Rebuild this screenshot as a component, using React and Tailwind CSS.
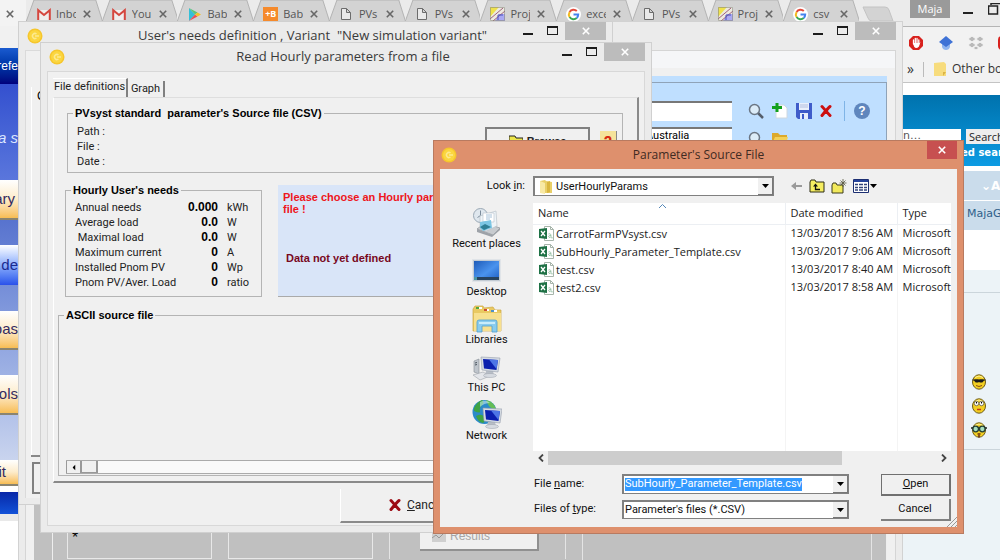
import React, { useState } from "react";
import clsx from "clsx";

const browserTabs = [
    { name: "Inbo", icon: "gmail" },
    { name: "You", icon: "gmail" },
    { name: "Bab", icon: "play" },
    { name: "Bab", icon: "babel" },
    { name: "PVs", icon: "page" },
    { name: "PVs", icon: "page" },
    { name: "Proj", icon: "chart" },
    { name: "exce", icon: "google" },
    { name: "PVs", icon: "page" },
    { name: "Proj", icon: "chart" },
    { name: "csv", icon: "google" },
];

const needs = [
    { label: "Annual needs", value: "0.000", unit: "kWh" },
    { label: "Average load", value: "0.0", unit: "W" },
    { label: "\u00a0Maximal load", value: "0.0", unit: "W" },
    { label: "Maximum current", value: "0", unit: "A" },
    { label: "Installed Pnom PV", value: "0", unit: "Wp" },
    { label: "Pnom PV/Aver. Load", value: "0", unit: "ratio" },
];

const files = [
    { name: "CarrotFarmPVsyst.csv", date: "13/03/2017 8:56 AM" },
    { name: "SubHourly_Parameter_Template.csv", date: "13/03/2017 9:06 AM" },
    { name: "test.csv", date: "13/03/2017 8:40 AM" },
    { name: "test2.csv", date: "13/03/2017 8:58 AM" },
];

/* ==================== Icons ==================== */

function TabIcon({ type }) {
    if (type === "gmail") {
        return (
            <svg className="h-[13px] w-[14px] shrink-0" viewBox="0 0 14 13">
                <path d="M1 2h12v10H1z" fill="#f0eeee" />
                <path d="M1.2 12V2.2L7 7l5.8-4.8V12" fill="none" stroke="#d5473f" strokeWidth="2" />
            </svg>
        );
    }
    if (type === "play") {
        return (
            <svg className="h-[13px] w-[14px] shrink-0" viewBox="0 0 14 13">
                <path d="M1 0v13l6-6.5z" fill="#35bfd8" />
                <path d="M1 0l6 6.5L9.500 4.500z" fill="#5bc47a" />
                <path d="M1 13l6-6.500 2.500 2z" fill="#e8505b" />
                <path d="M9.500 4.500L13 6.500l-3.500 2L7 6.500z" fill="#f5c228" />
            </svg>
        );
    }
    if (type === "babel") {
        return (
            <span className="flex h-[15px] w-[15px] shrink-0 items-center justify-center bg-[#f58a2c] text-[9px] font-bold text-white">
                +B
            </span>
        );
    }
    if (type === "page") {
        return (
            <svg className="h-[12px] w-[12px] shrink-0" viewBox="0 0 12 12">
                <path d="M1.500 .5h5l4 4v7h-9zM6.500 .5v4h4" fill="#e9e9e9" stroke="#6c6c6c" />
            </svg>
        );
    }
    if (type === "chart") {
        return (
            <svg className="h-[14px] w-[15px] shrink-0" viewBox="0 0 15 14">
                <path d="M0 0h15v14H0z" fill="#eceae0" />
                <path d="M0 0h9L0 10z" fill="#efe24c" />
                <path d="M9 7h6v7H5z" fill="#a9a9f2" />
                <path d="M0 12L13 1M3 14L15 4" stroke="#a0607c" strokeWidth="1" />
                <path d="M8 8h5M8 8v5" stroke="#4b54c4" />
                <path d="M.5 .5h14v13H.5z" fill="none" stroke="#8a8a80" strokeWidth=".6" />
            </svg>
        );
    }
    return (
        <svg className="h-[15px] w-[15px] shrink-0" viewBox="0 0 15 15">
            <circle cx="7.500" cy="7.500" r="7.500" fill="#fff" />
            <g fill="none" strokeWidth="2">
                <path d="M3.600 5A4.700 4.700 0 0 1 10.800 4" stroke="#e34a3b" />
                <path d="M3.600 10A5 5 0 0 1 3.600 5" stroke="#f3b91f" />
                <path d="M10.700 11A4.700 4.700 0 0 1 3.600 10" stroke="#38a855" />
                <path d="M7.500 7.500h4.700a4.700 4.700 0 0 1-1.500 3.500" stroke="#4482ee" />
            </g>
        </svg>
    );
}

function AppIcon() {
    return (
        <svg className="h-4 w-4 shrink-0" viewBox="0 0 16 16">
            <circle cx="8" cy="8" r="7.500" fill="#f6c62c" />
            <circle cx="8" cy="8" r="6" fill="#fbd640" />
            <path d="M9.500 6a2.500 2.500 0 1 0 0 4M8 8h4" fill="none" stroke="#fdea90" strokeWidth="1.500" />
        </svg>
    );
}

function Cross({ className }) {
    return (
        <svg className={className} viewBox="0 0 10 10">
            <path d="M1 1l8 8M9 1L1 9" fill="none" stroke="currentColor" strokeWidth="2" />
        </svg>
    );
}

function BoldCross({ className }) {
    return (
        <svg className={className} viewBox="0 0 12 12">
            <path d="M2 1.500c2 2 5 6 8 9M10 1.500C8 3 4 8 2 10.500" fill="none" stroke="currentColor" strokeWidth="3" strokeLinecap="round" />
        </svg>
    );
}

function Triangle({ className = "h-[4px] w-[7px]" }) {
    return (
        <svg className={className} viewBox="0 0 8 4" preserveAspectRatio="none">
            <path d="M0 0h8L4 4z" fill="#000" />
        </svg>
    );
}

function Magnifier() {
    return (
        <svg className="h-4 w-4" viewBox="0 0 16 16">
            <path d="M10 10l5 5" stroke="#555e6b" strokeWidth="2.500" />
            <circle cx="6.500" cy="6.500" r="5" fill="#dcecf8" stroke="#6b7684" strokeWidth="1.500" />
        </svg>
    );
}

function ExcelIcon() {
    return (
        <svg className="h-[15px] w-[15px] shrink-0" viewBox="0 0 15 15">
            <path d="M5.500 .5h6l3 3v11h-9z" fill="#fff" stroke="#a7b5ab" />
            <path d="M11.500 .5v3h3" fill="none" stroke="#a7b5ab" />
            <path d="M9.500 8c2.500-1 2.500 1 2.500 4M12 9.500c-3-.5-3 2-1 2M13 11v1.500" fill="none" stroke="#9cc5aa" />
            <path d="M0 3l8-1v11l-8-1z" fill="#1e7145" />
            <path d="M2 5l4 5M6 5l-4 5" stroke="#fff" strokeWidth="1.300" />
        </svg>
    );
}

function RecentIcon() {
    return (
        <svg className="h-[30px] w-[30px]" viewBox="0 0 30 30">
            <path d="M5 22l8-6 15 5-7 7z" fill="#c7cbcf" stroke="#8b9096" strokeWidth=".7" />
            <path d="M5 22v3l15 5 8-7v-2l-7 7z" fill="#9da2a8" />
            <circle cx="8.500" cy="8.500" r="7" fill="#dfe7ee" stroke="#9aa8b5" />
            <path d="M8.500 3.500v5l-3 2" fill="none" stroke="#7b8b9b" />
            <path d="M8 9l16-5 1 15-11 5-6-3z" fill="#eef4f8" stroke="#b2bcc5" strokeWidth=".6" />
            <path d="M11 6h11v9H11z" fill="#fff" stroke="#b5c0ca" strokeWidth=".6" />
            <path d="M8 15l11-2 1 8-9 3-3-3z" fill="#7cc6e4" />
            <path d="M8 20l5-3 6 3-7 3z" fill="#2f7f96" />
            <path d="M14 8h6M14 10h6M14 12h4" stroke="#91b2d0" strokeWidth=".8" />
        </svg>
    );
}

function DesktopIcon() {
    return (
        <svg className="h-[23px] w-[29px]" viewBox="0 0 29 23">
            <defs>
                <linearGradient id="desk" x1="0" y1="0" x2="1" y2="1">
                    <stop offset="0" stopColor="#1e5bb8" />
                    <stop offset=".55" stopColor="#4a93ee" />
                    <stop offset="1" stopColor="#1f5fc4" />
                </linearGradient>
            </defs>
            <path d="M.5 .5h28v22H.5z" fill="#c3cbd3" stroke="#e0e4e8" />
            <path d="M2 2h25v19H2z" fill="url(#desk)" />
            <path d="M2 18h25v3H2z" fill="#27435f" />
            <path d="M2 18h3v3H2z" fill="#4b97a6" />
        </svg>
    );
}

function LibrariesIcon() {
    return (
        <svg className="h-[28px] w-[30px]" viewBox="0 0 30 28">
            <path d="M1 4l2-3h8l1 2 9-1 2 3h6v21H1z" fill="#e9c962" stroke="#cda744" strokeWidth=".7" />
            <path d="M2 8h27v18H2z" fill="#f7e08f" />
            <path d="M4 2h6v2H4z" fill="#fff" />
            <path d="M4 2h3v2H4z" fill="#51a83c" />
            <path d="M12 4h5v2h-5z" fill="#fff" />
            <path d="M12 4h3v2h-3z" fill="#cf4a32" />
            <path d="M19 5h6v2h-6z" fill="#fff" />
            <path d="M19 5h3v2h-3z" fill="#4e90c8" />
            <path d="M5 27V17q0-2 2-2h16q2 0 2 2v10h-5v-6H10v6z" fill="#8accee" stroke="#4fa0ce" strokeWidth=".8" />
            <path d="M7 17h16v2H7z" fill="#c8ecfb" />
        </svg>
    );
}

function Monitor({ x, y }) {
    return (
        <g transform={`translate(${x} ${y})`}>
            <path d="M5 15h7l1 4H4z" fill="#b7bdc6" />
            <ellipse cx="9" cy="19.500" rx="6.500" ry="2" fill="#d6dae0" stroke="#9ca2ac" strokeWidth=".5" />
            <path d="M0 1l19 1-2 14L1 14z" fill="#d5dbe3" stroke="#969eab" strokeWidth=".6" />
            <path d="M2 3l15 1-1.500 10L3 12.500z" fill="#0b1fae" />
            <path d="M8 3.400l9 .6-1.500 9z" fill="#4d75e6" />
        </g>
    );
}

function ThisPcIcon() {
    return (
        <svg className="h-[26px] w-[30px]" viewBox="0 0 30 26">
            <path d="M2 6l5-2v15l-5-2z" fill="#bfc5cc" stroke="#868d96" strokeWidth=".6" />
            <path d="M3 8l2-.5M3 10l2-.5" stroke="#4c555f" />
            <path d="M1 20l10-3 7 4-10 4z" fill="#e4e6ea" stroke="#9ea3aa" strokeWidth=".6" />
            <Monitor x={9} y={1} />
        </svg>
    );
}

function NetworkIcon() {
    return (
        <svg className="h-[30px] w-[30px]" viewBox="0 0 30 30">
            <circle cx="12.500" cy="13" r="12" fill="#2c8bc9" />
            <path d="M2 9Q5 3 10 1q3 2 0 5t-2 6-6 0zM4 17q6-3 8 1t-1 6q-5-1-7-7z" fill="#3ea344" />
            <path d="M14 1q8 2 10 9-5 0-7-3t-3-6z" fill="#64bd55" />
            <path d="M8 3q6-3 10 1-6 0-10 4z" fill="#c5e9ee" fillOpacity=".6" />
            <Monitor x={11} y={8} />
        </svg>
    );
}

function Smiley({ kind }) {
    return (
        <svg className="h-4 w-4" viewBox="0 0 16 16">
            <ellipse cx="8" cy="8" rx="6.500" ry="7.200" fill="#f3cf22" stroke="#6d5a16" />
            <path d="M4 3.500q4-3 8 0" fill="none" stroke="#fff39b" />
            {kind === "cool" && (
                <>
                    <path d="M1.500 6h13M3.500 6h4v2h-3zM8.500 6h4l-1 2h-3z" fill="#1a1a1a" stroke="#1a1a1a" />
                    <path d="M5 11.500q3 2 6 0" fill="none" stroke="#8a4b12" />
                </>
            )}
            {kind === "roll" && (
                <>
                    <circle cx="5.500" cy="5.500" r="2.200" fill="#fff" stroke="#333" strokeWidth=".6" />
                    <circle cx="10.500" cy="5.500" r="2.200" fill="#fff" stroke="#333" strokeWidth=".6" />
                    <path d="M5.500 4v1.500M10.500 4v1.500" stroke="#000" />
                    <path d="M6 11.500h4" stroke="#c03a18" strokeWidth="1.500" />
                </>
            )}
            {kind === "geek" && (
                <>
                    <path d="M0 6h16" stroke="#222" strokeWidth="1.500" />
                    <circle cx="4.700" cy="7" r="2.800" fill="#a6dfc0" stroke="#243f35" strokeWidth="1.300" />
                    <circle cx="11.300" cy="7" r="2.800" fill="#a6dfc0" stroke="#243f35" strokeWidth="1.300" />
                    <path d="M6.500 12h3M8 13v2.500" stroke="#6b2e10" strokeWidth="1.500" />
                </>
            )}
        </svg>
    );
}

/* ==================== Window parts ==================== */

function WindowButtons() {
    return (
        <div className="flex items-start">
            <button aria-label="Minimize" className="flex h-[13px] w-6 items-end justify-center">
                <span className="h-[2px] w-[10px] bg-[#1c1c1c]" />
            </button>
            <button aria-label="Maximize" className="flex h-[13px] w-6 items-end justify-center">
                <span className="h-[9px] w-[11px] border border-t-2 border-[#1c1c1c]" />
            </button>
            <button aria-label="Close" className="ml-px flex h-[18px] w-[41px] items-center justify-center bg-[#bcbcbc] text-white">
                <Cross className="h-2 w-2" />
            </button>
        </div>
    );
}

function TitleBar({ title }) {
    return (
        <div className="grid h-7 grid-cols-[100px_1fr_100px] pr-[6px]">
            <div className="flex items-center pl-2">
                {title && <AppIcon />}
            </div>
            <h2 className="self-center text-center font-['Open_Sans',sans-serif] text-[13px] whitespace-pre text-[#3a3a3a]">
                {title}
            </h2>
            <div className="flex justify-end">
                <WindowButtons />
            </div>
        </div>
    );
}

function GroupBox({ title, className, children }) {
    return (
        <fieldset className={clsx("border border-[#b4b4b4]", className)}>
            <legend className="ml-[5px] px-[2px] font-['Liberation_Sans',sans-serif] text-[11px] leading-[12px] font-bold whitespace-pre text-black">
                {title}
            </legend>
            {children}
        </fieldset>
    );
}

/* ==================== Browser behind the windows ==================== */

function BrowserTab({ name, icon }) {
    return (
        <button className="relative flex h-[22px] min-w-0 flex-1 items-start pt-[6px] pl-[10px] text-left">
            <svg className="absolute inset-0 h-full w-full" viewBox="0 0 76 22" preserveAspectRatio="none">
                <path d="M0 22L8 0H70L77 22z" fill="#d3d3d3" stroke="#b3b3b3" />
            </svg>
            <span className="relative flex w-full items-center">
                <span className="flex w-[15px] shrink-0 justify-center">
                    <TabIcon type={icon} />
                </span>
                <span className="ml-[5px] h-4 w-[20px] shrink-0 overflow-hidden font-['Open_Sans',sans-serif] text-[11px] leading-[16px] text-[#555]">
                    {name}
                </span>
                <Cross className="ml-[7px] h-2 w-2 shrink-0 text-[#666]" />
            </span>
        </button>
    );
}

function TabStrip() {
    return (
        <header className="flex h-[26px] w-full overflow-hidden bg-[#ebebeb]">
            <div className="flex w-[26px] shrink-0 items-start bg-[#f3f3f3] pt-[10px] pl-[6px]">
                <Cross className="h-2 w-2 text-[#666]" />
            </div>
            <div className="flex w-[833px] shrink-0">
                {browserTabs.map((tab, index) => (
                    <BrowserTab key={index} name={tab.name} icon={tab.icon} />
                ))}
            </div>
            <svg className="mt-[6px] ml-[3px] h-4 w-8 shrink-0" viewBox="0 0 32 16">
                <path d="M1 1h22q3 0 4 3l4 11H10q-3 0-4-3z" fill="#d3d3d3" stroke="#c3c3c3" />
            </svg>
            <span className="ml-4 flex h-[18px] w-10 shrink-0 items-center justify-center bg-[#9a9a9a] font-['Open_Sans',sans-serif] text-[11px] text-white">
                Maja
            </span>
            <span className="mt-3 ml-[13px] h-[2px] w-[10px] shrink-0 bg-[#222]" />
            <svg className="mt-[3px] ml-[15px] h-3 w-3 shrink-0" viewBox="0 0 12 12">
                <path d="M.5 3h9v8h-9zM3 2V.5h9" fill="none" stroke="#222" strokeWidth="1.500" />
            </svg>
        </header>
    );
}

function ForumPage() {
    return (
        <main className="min-w-0 flex-1 overflow-hidden bg-[#ecf3f7] font-['DejaVu_Sans',sans-serif] text-[11px] whitespace-nowrap">
            <div className="flex h-[33px] items-center gap-[14px] border-t border-[#b5b5b5] bg-[#f2f2f2] pl-[5px]">
                <svg className="h-4 w-4 shrink-0" viewBox="0 0 16 16">
                    <path d="M5 1h6l4 4v6l-4 4H5l-4-4V5z" fill="#d8211d" />
                    <path d="M5.500 9V5M7.300 8V3.500M9 8V3.500M10.800 9V5" stroke="#fff" strokeWidth="1.300" strokeLinecap="round" />
                    <path d="M5 8h6.500l1-1.500-1.500 5q-3 3-5 0z" fill="#fff" />
                </svg>
                <svg className="h-4 w-4 shrink-0" viewBox="0 0 16 16">
                    <path d="M4 8h8v4q-1 3-4 3t-4-3z" fill="#8fb5f0" />
                    <path d="M8 1l7 6-7 5-7-5z" fill="#3e72d6" />
                </svg>
                <svg className="h-4 w-4 shrink-0" viewBox="0 0 16 16">
                    <path d="M4 1l4 3-4 3-4-3zM12 1l4 3-4 3-4-3zM4 7l4 3-4 3-4-3zM12 7l4 3-4 3-4-3zM8 11l3 2-3 2-3-2z" fill="#b9b9b9" stroke="#f2f2f2" />
                </svg>
                <span className="h-[14px] w-3 shrink-0 rounded bg-[#d8211d]" />
            </div>
            <div className="flex h-6 items-center border-b border-[#c4c4c4] bg-[#f2f2f2] pb-[3px] font-['Open_Sans',sans-serif] text-[12px] text-[#333]">
                <span className="w-5 shrink-0 pl-1 text-sm leading-[16px]">»</span>
                <span className="h-[15px] w-px shrink-0 bg-[#bbb]" />
                <svg className="mr-[6px] ml-[10px] h-[14px] w-3 shrink-0" viewBox="0 0 12 14">
                    <path d="M0 1l10-1 2 2v12H0z" fill="#f7dc7d" />
                    <path d="M9 14v-4h3z" fill="#dbb545" />
                </svg>
                Other bookmarks
            </div>
            <div className="h-3 bg-white" />
            <div className="h-[71px] bg-linear-to-b from-[#0072ad] to-[#0c9be3] pt-[33px]">
                <div className="flex h-4 items-center gap-[5px]">
                    <input aria-label="Search forum" defaultValue="n…" className="h-[14px] w-[58px] shrink-0 bg-white font-['DejaVu_Sans',sans-serif] text-[11px] text-[#555]" />
                    <button className="h-[15px] bg-[#eee] px-[3px] font-['Open_Sans',sans-serif] text-[11px] leading-[15px] text-[#222]">Search</button>
                </div>
                <a href="#search" className="ml-[58px] block pt-[2px] text-[10px] leading-[14px] font-bold text-white">
                    ed search
                </a>
            </div>
            <div className="h-[5px] bg-white" />
            <div className="h-[29px] bg-[#cadceb] pt-[6px] pl-[78px] text-[12px] font-bold text-white">⌄A</div>
            <div className="h-px bg-white" />
            <div className="h-[29px] bg-[#cadceb] pt-[5px] pl-[64px] text-[#2f5f8a]">
                <a href="#user">MajaG</a>
            </div>
            <div className="h-10 bg-white" />
            <div className="h-[23px] border-b border-[#cbd5db]" />
            <div className="flex h-[157px] flex-col gap-2 border-b border-[#cbd5db] pt-[81px] pl-[68px]">
                <Smiley kind="cool" />
                <Smiley kind="roll" />
                <Smiley kind="geek" />
            </div>
        </main>
    );
}

function PageBehind() {
    const links = "flex shrink-0 items-center justify-end overflow-hidden whitespace-nowrap border-b-2 border-[#8a8470] bg-linear-to-b from-white via-[#fdeccb] to-[#f7bd52] text-[15px] text-[#332a60]";
    return (
        <div className="flex min-h-[534px]">
            <aside className="flex w-[18px] shrink-0 flex-col overflow-hidden bg-white font-['Liberation_Sans',sans-serif]">
                <div className="h-[22px] bg-[#f1f1f1]" />
                <div className="flex h-9 items-center justify-end bg-linear-to-b from-[#1a5bd0] to-[#00007c] text-[12px] text-white">
                    refe
                </div>
                <div className="flex h-24 items-center justify-end bg-linear-to-b from-[#3450cf] to-[#5a76dc] pt-3 text-[15px] whitespace-nowrap text-[#dbe6ff] italic">
                    a s
                </div>
                <div className="flex h-[280px] flex-col bg-linear-to-b from-[#4762c8] to-[#c9d4ee]">
                    <button className={clsx("mb-[25px] h-10 pr-[3px]", links)}>ary</button>
                    <button className="mb-[26px] flex h-10 shrink-0 items-center justify-end overflow-hidden bg-linear-to-b from-white to-[#2b50ea] text-[15px] whitespace-nowrap text-[#1a2b90]">
                        t de
                    </button>
                    <button className={clsx("mb-[25px] h-[39px]", links)}>bas</button>
                    <button className={clsx("h-10", links)}>ols</button>
                </div>
                <button className={clsx("h-[26px] pr-3", links)}>it</button>
                <div className="mt-[6px] h-[22px] bg-linear-to-b from-[#0a27a8] to-[#1352d8]" />
                <div className="h-[7px] bg-[#e9e9e9]" />
            </aside>
            <div className="w-[885px] shrink-0" />
            <ForumPage />
        </div>
    );
}

/* ==================== Project window ==================== */

function ProjectWindow() {
    return (
        <section className="absolute top-[21px] left-[18px] flex h-[600px] w-[885px] flex-col border-x border-t border-[#d2d2d2] bg-[#ebebeb] text-[11px]">
            <TitleBar />
            <div className="mx-[6px] flex flex-1 flex-col border border-[#d5d5d5] bg-[#f0f0f0]">
                <div className="h-[17px] bg-[#f5f6f8]" />
                <div className="mt-[8px] mr-2 ml-2 h-[400px] bg-[#bfdfff] pt-[6px]">
                    <div className="h-full border-t border-r border-[#8fa3b8] pt-[18px] pr-[8px]">
                        <div className="flex items-center justify-end">
                            <input aria-label="Project" className="mr-4 h-5 w-[120px] border-t-2 border-[#777] bg-white" />
                            <button aria-label="Find" className="mr-2"><Magnifier /></button>
                            <button aria-label="New" className="mr-2">
                                <svg className="h-4 w-4" viewBox="0 0 16 16">
                                    <path d="M4 2h8l3 3v10H4z" fill="#fff" stroke="#cfd8e0" />
                                    <path d="M5 0v9M0 4.500h10" stroke="#13a01d" strokeWidth="3" />
                                </svg>
                            </button>
                            <button aria-label="Save" className="mr-2">
                                <svg className="h-4 w-4" viewBox="0 0 16 16">
                                    <path d="M0 0h16v16H2l-2-2z" fill="#3f5cc9" />
                                    <path d="M3 0h10v7H3zM4 10h8v6H4z" fill="#e8effb" />
                                    <path d="M4 2h8M4 4h8" stroke="#b3bfdf" />
                                    <path d="M6 11h2v5H6z" fill="#3f5cc9" />
                                </svg>
                            </button>
                            <button aria-label="Delete" className="text-[#cc0e0e]"><BoldCross className="h-4 w-3" /></button>
                            <span className="ml-3 h-5 w-px bg-[#7fb4e6]" />
                            <button aria-label="Help" className="ml-[9px]">
                                <span className="mr-2 flex h-4 w-4 items-center justify-center rounded-full bg-[#5f86bd] font-['Liberation_Sans',sans-serif] text-[12px] font-bold text-white">
                                    ?
                                </span>
                            </button>
                        </div>
                        <div className="mt-[6px] flex items-start justify-end">
                            <div className="mr-4 h-5 w-[120px] border-t-2 border-[#777] bg-white pl-[34px] font-['Roboto',sans-serif] text-[11px] leading-[14px]">
                                Australia
                            </div>
                            <span className="mt-1 mr-2"><Magnifier /></span>
                            <svg className="mt-1 mr-[90px] h-4 w-4" viewBox="0 0 16 16">
                                <path d="M0 2h6l2 2h7v9H0z" fill="#dca92c" />
                                <path d="M3 6h13l-2 7H0z" fill="#f4d158" />
                            </svg>
                        </div>
                    </div>
                </div>
                <div className="mx-2 flex flex-1 bg-[#c0c0c0]">
                    <div className="ml-[18px] flex h-[100px] flex-1 gap-4 border-x border-[#eee] pr-[14px] pl-[14px]">
                        <div className="flex h-[83px] w-[145px] items-end border border-[#e8e8e8] pb-[12px] pl-1 font-['Liberation_Sans',sans-serif] text-base leading-[16px]">*</div>
                        <div className="h-[83px] w-[145px] border border-[#e8e8e8]" />
                        <div className="flex h-[83px] flex-1 items-end border-x border-[#e4e4e4] pb-[8px] pl-[30px]">
                            <button disabled className="flex h-9 w-[119px] items-center gap-1 border-r-2 border-b-2 border-[#909090] bg-[#f0f0f0] pt-2 pl-3 font-['Liberation_Sans',sans-serif] text-[12px] text-[#a5a5a5]">
                                <svg className="h-3 w-[14px]" viewBox="0 0 14 12">
                                    <path d="M0 0h14v12H0z" fill="#cfcfcf" />
                                    <path d="M0 8l4-3 3 3 6-6" fill="none" stroke="#999" />
                                </svg>
                                Results
                            </button>
                        </div>
                        <div className="w-[290px] border-x border-[#e4e4e4]" />
                    </div>
                </div>
            </div>
        </section>
    );
}

/* ==================== User's needs window ==================== */

function NeedsWindow() {
    return (
        <section className="absolute top-[21px] left-[18px] flex h-[484px] w-[595px] flex-col border border-[#d0d0d0] bg-[#ebebeb] pb-[6px] pl-[6px]">
            <div className="-ml-[6px]">
                <TitleBar title={'User\'s needs definition , Variant  "New simulation variant"'} />
            </div>
            <div className="flex flex-1 flex-col justify-between border-t border-l border-[#dadada] bg-[#f0f0f0] pt-9 pl-[5px]">
                <div className="flex-1 border-l border-white pl-[5px] font-['Liberation_Sans',sans-serif] text-[12px] leading-[18px]">C</div>
                <div className="border-t-2 border-[#888]" />
                <div className="mt-[5px] mb-1 ml-[1px] h-8 w-40 border-2 border-[#808080]" />
            </div>
        </section>
    );
}

/* ==================== Hourly parameters window ==================== */

function HourlyWindow() {
    const [tab, setTab] = useState("files");
    return (
        <section className="absolute top-[42px] left-[40px] flex h-[491px] w-[612px] flex-col border border-[#d0d0d0] bg-[#ebebeb] px-[6px] pb-[6px] font-['Roboto',sans-serif] text-[11px] text-[#222]">
            <div className="-mx-[6px]">
                <TitleBar title="Read Hourly parameters from a file" />
            </div>
            <div className="flex flex-1 flex-col border border-[#d8d8d8] bg-[#f0f0f0] px-[5px] pt-[6px]">
                <div role="tablist" className="flex items-end">
                    <button
                        role="tab"
                        aria-selected={tab === "files"}
                        onClick={() => setTab("files")}
                        className="h-[19px] w-[75px] border-t border-r-2 border-t-white border-r-[#808080] pb-[2px] whitespace-nowrap"
                    >
                        File definitions
                    </button>
                    <button
                        role="tab"
                        aria-selected={tab === "graph"}
                        onClick={() => setTab("graph")}
                        className="h-4 w-[37px] border-r-2 border-r-[#808080]"
                    >
                        Graph
                    </button>
                </div>
                <div className="flex flex-col border-t border-r-2 border-b-2 border-l border-t-[#dedede] border-r-[#8a8a8a] border-b-[#8a8a8a] border-l-white pt-[9px] pr-2 pb-[5px] pl-1">
                    <GroupBox title="PVsyst standard  parameter's Source file (CSV)" className="mr-[6px] ml-[9px] h-[66px]">
                        <div className="flex justify-between pl-[9px]">
                            <div className="flex flex-col pt-[5px] leading-[15px]">
                                <span>Path :</span>
                                <span>File :</span>
                                <span>Date :</span>
                            </div>
                            <div className="mt-[8px] flex gap-[10px] pr-[5px]">
                                <button className="flex h-7 w-[105px] items-center justify-center gap-1 border-2 border-[#808080] font-['Liberation_Sans',sans-serif] font-bold">
                                    <svg className="h-3 w-[14px]" viewBox="0 0 14 12">
                                        <path d="M0 1h6l1 2h7v9H0z" fill="#ece54a" stroke="#222" />
                                    </svg>
                                    Browse
                                </button>
                                <button aria-label="Help" className="mt-1 h-6 w-[17px] border-r border-[#888] bg-[#f5e39a] text-[16px] leading-[16px] font-bold text-[#d82a10]">?</button>
                            </div>
                        </div>
                    </GroupBox>
                    <div className="mt-[11px] flex items-end gap-4">
                        <GroupBox title="Hourly User's needs" className="ml-[7px] h-[113px] w-[197px]">
                            <table className="mt-[4px] ml-[9px]">
                                <tbody>
                                    {needs.map((item, index) => (
                                        <tr key={index} className="h-[15px] leading-[15px]">
                                            <td className="w-[104px] whitespace-nowrap">{item.label}</td>
                                            <td className="w-[39px] text-right font-['Liberation_Sans',sans-serif] text-[12px] font-bold text-black">{item.value}</td>
                                            <td className="pl-[9px]">{item.unit}</td>
                                        </tr>
                                    ))}
                                </tbody>
                            </table>
                        </GroupBox>
                        <div className="flex h-[112px] flex-1 flex-col gap-[37px] border-b border-[#aaa] bg-[#d9e5f8] pt-[6px] pl-[5px] font-['Liberation_Sans',sans-serif] leading-[12px] font-bold">
                            <p className="text-[#ee1520]">
                                Please choose an Hourly parameters
                                <br />
                                file !
                            </p>
                            <p className="pl-[3px] text-[#78081e]">Data not yet defined</p>
                        </div>
                    </div>
                    <GroupBox title="ASCII source file" className="mt-[12px] flex h-[167px] flex-col">
                        <div className="mt-[139px] ml-[7px] flex h-[14px] border-t border-b border-[#aaa] bg-[#f9f9f9]">
                            <button aria-label="Scroll left" className="flex w-4 items-center justify-center border-r-2 border-l border-[#999] bg-[#f0f0f0]">
                                <span className="rotate-90"><Triangle className="h-[3px] w-[6px]" /></span>
                            </button>
                            <span className="w-4 border-r-2 border-b border-[#999] bg-[#f0f0f0]" />
                        </div>
                    </GroupBox>
                </div>
                <button className="mt-[6px] ml-[287px] flex h-[34px] w-[150px] items-center gap-[6px] border-b-2 border-l border-b-[#8a8a8a] border-l-white pl-12 text-[12px]">
                    <BoldCross className="h-[14px] w-3 text-[#9c0b14]" />
                    <span><u>C</u>ancel</span>
                </button>
            </div>
        </section>
    );
}

/* ==================== File dialog ==================== */

function Place({ name, children }) {
    return (
        <button className="flex h-12 w-full flex-col items-center justify-end">
            {children}
            <span className="leading-[14px]">{name}</span>
        </button>
    );
}

function DropButton({ label }) {
    return (
        <button aria-label={label} className="flex w-[15px] shrink-0 items-center justify-center border-r border-b border-[#777] bg-[#f0f0f0]">
            <Triangle />
        </button>
    );
}

function FileDialog() {
    return (
        <section
            role="dialog"
            aria-labelledby="dialog-title"
            className="absolute top-[140px] left-[433px] flex h-[394px] w-[531px] flex-col border border-[#b87a60] bg-[#de906d] px-[6px] pb-[6px] font-['Roboto',sans-serif] text-[11px] text-[#111]"
        >
            <div className="grid h-[28px] grid-cols-[40px_1fr_40px]">
                <div className="flex items-center pl-px"><AppIcon /></div>
                <h2 id="dialog-title" className="self-center text-center font-['Open_Sans',sans-serif] text-[12px] text-[#402a22]">
                    Parameter's Source File
                </h2>
                <div className="flex justify-end">
                    <button aria-label="Close" className="flex h-[18px] w-[30px] items-center justify-center bg-[#c75050] text-white">
                        <Cross className="h-2 w-2" />
                    </button>
                </div>
            </div>
            <div className="relative flex flex-1 flex-col bg-[#f0f0f0] pt-[7px] pr-[6px]">
                <div className="flex h-5 items-center">
                    <label htmlFor="look-in" className="w-[93px] pr-2 text-right">Look <u>i</u>n:</label>
                    <div className="flex h-5 w-[241px] border border-t-2 border-l-2 border-[#808080] bg-white">
                        <svg className="mt-px ml-1 h-[15px] w-[14px] shrink-0" viewBox="0 0 14 15">
                            <path d="M1 2l5-1 1 1 6 1v11H1z" fill="#e9cf68" />
                            <path d="M1 2l5 2v11l-5-1z" fill="#f8e9a4" />
                            <path d="M8 3l3-1v11l-3 1z" fill="#d9b63f" />
                        </svg>
                        <select id="look-in" className="ml-[3px] min-w-0 flex-1 appearance-none bg-transparent leading-[16px]">
                            <option>UserHourlyParams</option>
                        </select>
                        <DropButton label="Show folders" />
                    </div>
                    <div className="ml-4 flex items-center gap-[6px]">
                        <button aria-label="Back">
                            <svg className="h-[14px] w-[13px]" viewBox="0 0 13 14">
                                <path d="M6 3v3h6v2H6v3L1 7z" fill="#9a9a9a" />
                            </svg>
                        </button>
                        <button aria-label="Up one level">
                            <svg className="h-[14px] w-4" viewBox="0 0 16 14">
                                <path d="M1 3l1-2h4l1 2h8v10H1z" fill="#f6ee62" stroke="#2c2c16" />
                                <path d="M6.500 6v4.500H11" fill="none" stroke="#111" strokeWidth="1.300" />
                                <path d="M4 7.500l2.500-3 2.500 3z" fill="#111" />
                            </svg>
                        </button>
                        <button aria-label="New folder">
                            <svg className="h-[15px] w-4" viewBox="0 0 16 15">
                                <path d="M1 6l1-2h3l1 2h6v8H1z" fill="#f1e95c" stroke="#3b3b1e" />
                                <path d="M12 0v8M8.500 4h7M9.500 1.500l5 5M14.500 1.500l-5 5" stroke="#55553e" strokeWidth=".8" />
                            </svg>
                        </button>
                        <button aria-label="View" className="flex items-center gap-px">
                            <svg className="h-[14px] w-4" viewBox="0 0 16 14">
                                <path d="M.5 .5h15v13H.5z" fill="#fff" stroke="#1c2f72" />
                                <path d="M1 1h14v2H1z" fill="#25439b" />
                                <path d="M2 5.500h3M6 5.500h4M11 5.500h3M2 8.500h3M6 8.500h4M11 8.500h3M2 11h3M6 11h4M11 11h3" stroke="#33457c" strokeWidth="1.500" />
                            </svg>
                            <Triangle />
                        </button>
                    </div>
                </div>
                <div className="mt-[7px] flex">
                    <nav className="flex w-[93px] shrink-0 flex-col">
                        <Place name="Recent places"><RecentIcon /></Place>
                        <Place name="Desktop"><span className="mb-[3px]"><DesktopIcon /></span></Place>
                        <Place name="Libraries"><LibrariesIcon /></Place>
                        <Place name="This PC"><ThisPcIcon /></Place>
                        <Place name="Network"><NetworkIcon /></Place>
                    </nav>
                    <div className="min-w-0 flex-1">
                        <div className="h-[248px] overflow-hidden bg-white">
                            <table className="h-full w-full table-fixed font-['Open_Sans',sans-serif] text-[11px] text-[#222]">
                                <thead>
                                    <tr className="h-[21px] border-b border-[#eceff3] text-left">
                                        <th className="relative w-[252px] border-r border-[#eceff3] pl-[5px] font-normal">
                                            Name
                                            <svg className="absolute top-[1px] left-1/2 h-1 w-[7px]" viewBox="0 0 7 4">
                                                <path d="M0 4l3.500-3.500L7 4" fill="none" stroke="#5588b8" />
                                            </svg>
                                        </th>
                                        <th className="w-[112px] border-r border-[#eceff3] pl-[5px] font-normal">Date modified</th>
                                        <th className="pl-[5px] font-normal">Type</th>
                                    </tr>
                                </thead>
                                <tbody>
                                    {files.map((file) => (
                                        <tr key={file.name} className="h-[18px] whitespace-nowrap">
                                            <td className="border-r border-[#f4f4f4] pl-[6px]">
                                                <span className="flex items-center gap-[2px] leading-[18px]">
                                                    <ExcelIcon />
                                                    {file.name}
                                                </span>
                                            </td>
                                            <td className="border-r border-[#f4f4f4] pl-[5px]">{file.date}</td>
                                            <td className="pl-[5px]">Microsoft</td>
                                        </tr>
                                    ))}
                                    <tr>
                                        <td className="border-r border-[#f4f4f4]" />
                                        <td className="border-r border-[#f4f4f4]" />
                                        <td />
                                    </tr>
                                </tbody>
                            </table>
                        </div>
                        <div className="flex h-[14px] items-center justify-between">
                            <button aria-label="Scroll left" className="flex w-[15px] justify-center">
                                <svg className="h-2 w-[6px]" viewBox="0 0 6 8">
                                    <path d="M5 .5L1.500 4 5 7.500" fill="none" stroke="#444" strokeWidth="1.800" />
                                </svg>
                            </button>
                            <span className="mr-auto h-[14px] w-[294px] bg-[#cdcdcd]" />
                            <button aria-label="Scroll right" className="flex w-[15px] justify-center">
                                <svg className="h-2 w-[6px]" viewBox="0 0 6 8">
                                    <path d="M1 .5L4.500 4 1 7.500" fill="none" stroke="#444" strokeWidth="1.800" />
                                </svg>
                            </button>
                        </div>
                    </div>
                </div>
                <div className="mt-[9px] ml-[94px] flex justify-between">
                    <div className="flex flex-col gap-[6px]">
                        <div className="flex items-center">
                            <label htmlFor="file-name" className="w-[88px]">File <u>n</u>ame:</label>
                            <div className="flex h-5 w-[227px] justify-between border border-t-2 border-l-2 border-[#808080] bg-white">
                                <input
                                    id="file-name"
                                    defaultValue="SubHourly_Parameter_Template.csv"
                                    className="my-[2px] ml-[1px] field-sizing-content bg-[#3399ff] text-white"
                                />
                                <DropButton label="Show recent names" />
                            </div>
                        </div>
                        <div className="flex items-center">
                            <label htmlFor="file-type" className="w-[88px]">Files of <u>t</u>ype:</label>
                            <div className="flex h-[19px] w-[227px] border border-t-2 border-l-2 border-[#808080] bg-white">
                                <select id="file-type" className="ml-[1px] min-w-0 flex-1 appearance-none bg-transparent leading-[16px]">
                                    <option>Parameter's files (*.CSV)</option>
                                </select>
                                <DropButton label="Show types" />
                            </div>
                        </div>
                    </div>
                    <div className="flex w-[70px] flex-col gap-[3px]">
                        <button className="h-[22px] border border-r-2 border-b-2 border-[#707070]"><u>O</u>pen</button>
                        <button className="h-[22px] border-r-2 border-b-2 border-[#808080]">Cancel</button>
                    </div>
                </div>
                <svg className="absolute right-0 bottom-0 h-[10px] w-[10px]" viewBox="0 0 10 10">
                    <path d="M0 10L10 0M4 10l6-6M8 10l2-2" stroke="#999" />
                </svg>
            </div>
        </section>
    );
}

function App() {
    return (
        <div className="relative h-screen w-full overflow-hidden bg-[#e7eff4]">
            <TabStrip />
            <PageBehind />
            <ProjectWindow />
            <NeedsWindow />
            <HourlyWindow />
            <FileDialog />
        </div>
    );
}

export default App;
